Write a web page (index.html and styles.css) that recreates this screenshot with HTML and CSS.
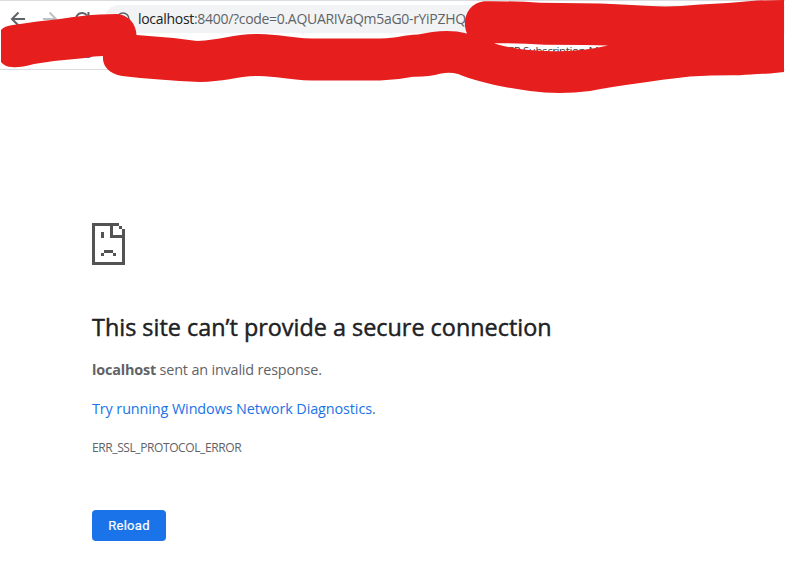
FILE: index.html
```html
<!DOCTYPE html>
<html lang="en">
<head>
<meta charset="utf-8">
<title>localhost</title>
<link rel="stylesheet" href="styles.css">
</head>
<body>
<header class="browser">
  <div class="toolbar">
    <svg class="nav" width="105" height="34" viewBox="0 0 105 34" fill="none" stroke-width="2">
      <path class="ink" d="M25 14H12M18.500 7.500L12 14L18.500 20.500"/>
      <path class="faint" d="M43 14H56M49.500 7.500L56 14L49.500 20.500"/>
      <path class="ink" d="M87 10.500A6.200 6.200 0 1 0 88 16M88.500 7V12H83.500"/>
    </svg>
    <div class="address">
      <svg class="info" width="14" height="14" viewBox="0 0 14 14" fill="none">
        <circle class="ink" cx="7" cy="7" r="6" stroke-width="1.500"/>
        <path class="ink" d="M7 6V10M7 3.500V5" stroke-width="1.500"/>
      </svg>
      <span class="url"><span class="host">localhost</span>:8400/?code=0.AQUARIVaQm5aG0-rYiPZHQ</span>
    </div>
  </div>
  <div class="bookmarks"><span class="dot"></span><span class="bookmark">MCP Subscription-Ma</span></div>
  <svg class="marker" width="785" height="96" viewBox="0 0 785 96">
    <path fill-rule="evenodd" d="M1 30Q4 26 13 25Q38 21 60 19Q84 15 100 14.500L117 14C129 15 136 24 136.500 35Q168 37 197 41C220 40 235 34 258 34C278 34 290 38 312 38.500H380C398 38 404 35 418 34.500C434 31 451 29 467 33.500C461 20 468 3 484 1.200Q515 1 540 2.700L600 3.500Q635 5 657 6.300Q675 7 700 4.500Q730 3 751 1Q765 0 784 0V72L770 73.500Q752 74 740 75.300Q715 75 690 76.600Q660 80 640 83Q610 87 590 91Q559 95 530 91C500 87 475 81 458 74Q450 72 441 73.500Q428 77 413 76.700Q397 80 380 80.500H312C288 80 276 76 258 76C240 76 222 82 200 82Q158 80 122 76C109 74 102 66 103 56Q94 56 85 58Q59 60 34 64Q19 68 12 67Q5 67 1 62ZM494 43.300C511 49 535 51 560 51.300Q584 51 608 45.500L585 45L545 44.800Q517 43 494 43.300Z"/>
  </svg>
</header>
<main class="error">
  <svg class="sad" width="33" height="42" viewBox="0 0 11 14" shape-rendering="crispEdges">
    <path d="M0 0H9V1H7V4H10V2H11V14H0ZM1 1V13H10V5H6V1ZM9 1H10V2H9ZM3 3H4V5H3ZM4 9H7V10H4ZM3 10H4V11H3ZM7 10H8V11H7Z" fill-rule="evenodd"/>
  </svg>
  <h1>This site can’t provide a secure connection</h1>
  <p class="reason"><strong>localhost</strong> <span>sent an invalid response.</span></p>
  <p class="suggest"><a>Try running Windows Network Diagnostics</a>.</p>
  <p class="code">ERR_SSL_PROTOCOL_ERROR</p>
  <button class="reload">Reload</button>
</main>
</body>
</html>
```
FILE: styles.css
```css
* { box-sizing: border-box; }
body {
  margin: 0;
  height: 577px;
  overflow: hidden;
  background: #fff;
  color: #5f6368;
  font-family: "Open Sans", "Noto Sans", sans-serif;
}
.browser {
  position: relative;
  height: 70px;
  border-top: 1px solid #dadce0;
  border-bottom: 1px solid #dadce0;
}
.toolbar { display: flex; height: 36px; padding-top: 4px; }
.nav { flex: none; }
.ink { stroke: #5f6368; }
.faint { stroke: #bdc1c6; }
.address {
  display: flex;
  align-items: center;
  flex: 1;
  height: 28px;
  padding-left: 11px;
  border-radius: 14px 0 0 14px;
  background: #f1f3f4;
}
.info { margin-right: 8px; }
.url { font-size: 14px; line-height: 20px; letter-spacing: -0.3px; white-space: nowrap; }
.host { color: #202124; }
.bookmarks { display: flex; height: 30px; padding: 4px 0 0 84px; color: #3c4043; font-size: 11.5px; line-height: 20px; }
.dot { width: 8px; height: 8px; margin-top: 9px; border-radius: 50%; background: #1a83d8; }
.bookmark { margin-left: 405px; letter-spacing: -0.4px; white-space: nowrap; }
.marker { position: absolute; left: 0; top: -1px; fill: #e61e1e; }
.error { display: flex; flex-direction: column; align-items: flex-start; padding: 153px 0 0 92px; }
.sad { fill: #535353; }
h1 {
  margin: 47px 0 0;
  color: #202124;
  font-size: 23.4px;
  line-height: 30px;
  font-weight: 400;
  -webkit-text-stroke: 0.45px #202124;
  white-space: nowrap;
}
p { margin: 0; font-size: 14.4px; line-height: 20px; white-space: nowrap; }
.reason { margin-top: 18px; letter-spacing: -0.17px; }
.suggest { margin-top: 19px; letter-spacing: -0.1px; }
.suggest a { color: #1a73e8; }
.code { margin-top: 19px; font-size: 12px; letter-spacing: -0.4px; }
.reload {
  width: 74px;
  height: 31px;
  margin-top: 52px;
  padding: 0;
  border: 0;
  border-radius: 4px;
  background: #1a73e8;
  color: #fff;
  font: 400 13px/31px Roboto, sans-serif;
  letter-spacing: 0.3px;
  -webkit-text-stroke: 0.2px #fff;
}
```
